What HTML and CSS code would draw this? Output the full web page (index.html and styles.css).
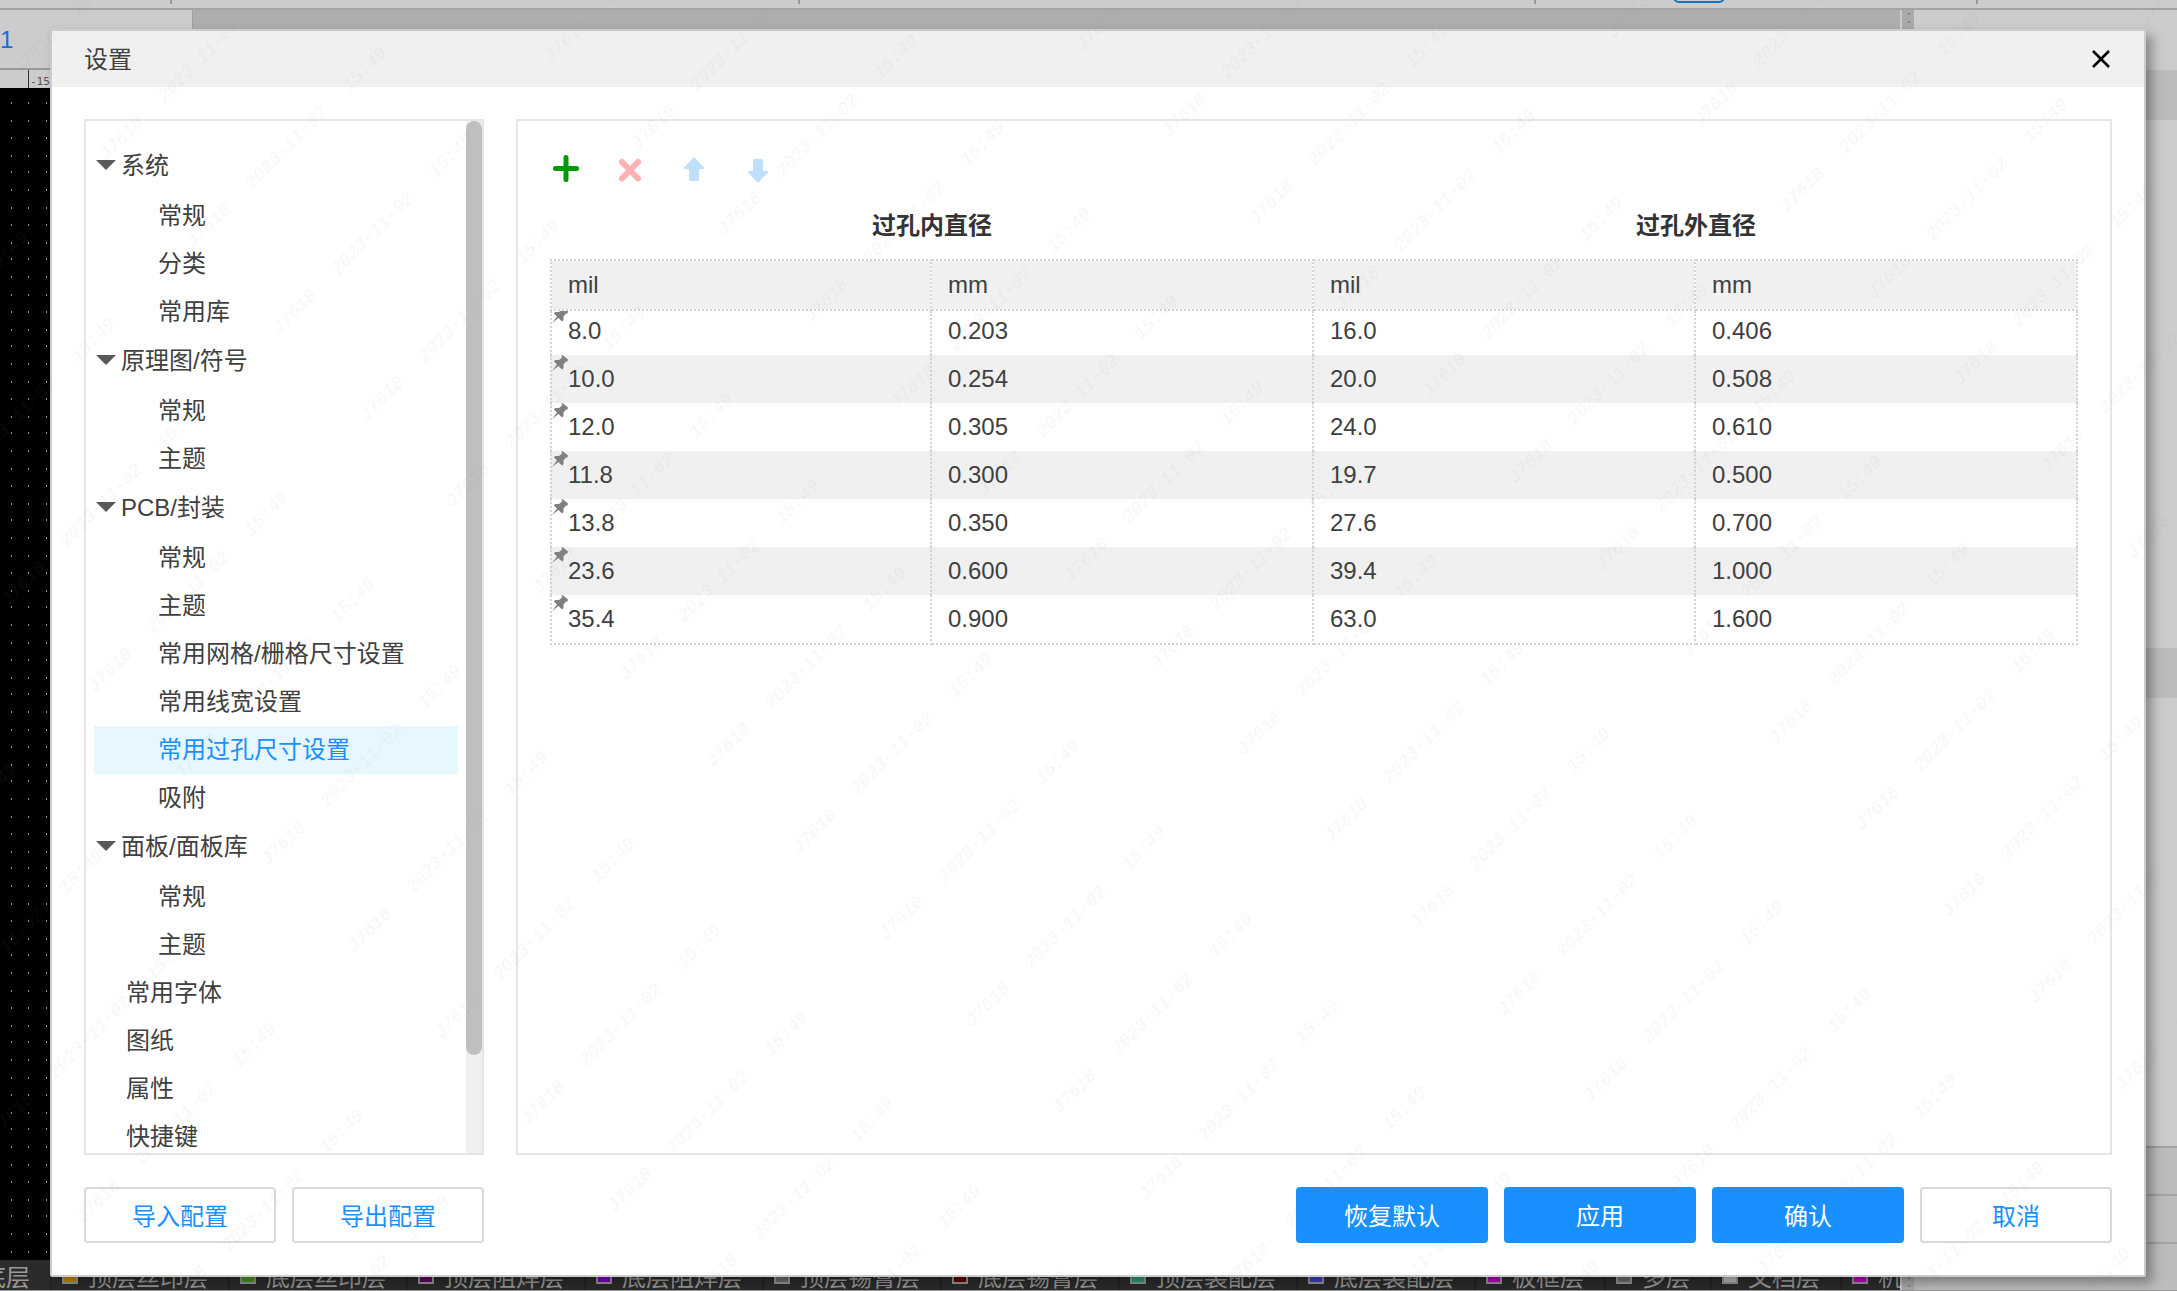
FILE: index.html
```html
<!DOCTYPE html>
<html lang="zh-CN">
<head>
<meta charset="utf-8">
<title>设置</title>
<link rel="stylesheet" href="styles.css">
</head>
<body>
<svg class="defs" aria-hidden="true">
  <symbol id="pin" viewBox="0 0 16 16"><path d="M10.500 0 L16 4.500 L15.500 6.500 L14 6.500 L11.500 9.500 L11.500 13 L10 14.500 L6.500 11 L0 16 L5 9.500 L2 6.500 L3 5 L7 5 L10 2.500 L9.500 1 Z"/></symbol>
</svg>

<div class="app" aria-hidden="true">
  <div class="app-toolbar">
    <i class="tick tick-1"></i><i class="tick tick-2"></i><i class="tick tick-3"></i><i class="tool-active"></i><i class="tick tick-4"></i>
  </div>
  <div class="app-main">
    <div class="workspace">
      <div class="tabs"><div class="tab">1</div></div>
      <div class="ruler"><span class="ruler-mark">-15</span></div>
      <svg class="canvas">
        <defs>
          <pattern id="dots" width="87" height="87" patternUnits="userSpaceOnUse" x="-6" y="-2">
            <path d="M17 17h1M34 17h1M52 17h1M17 35h1M34 35h1M52 35h1M17 52h1M34 52h1M52 52h1M17 70h1M34 70h1M52 70h1M17 86h1M34 86h1M52 86h1" stroke="#999" stroke-width="2"/>
          </pattern>
        </defs>
        <rect width="100%" height="100%" fill="#000"/>
        <rect width="100%" height="100%" fill="url(#dots)"/>
      </svg>
      <div class="layers">
        <span class="layer"><i class="swatch blue"></i>底层</span>
        <span class="layer"><i class="swatch yellow"></i>顶层丝印层</span>
        <span class="layer"><i class="swatch green"></i>底层丝印层</span>
        <span class="layer"><i class="swatch purple"></i>顶层阻焊层</span>
        <span class="layer"><i class="swatch violet"></i>底层阻焊层</span>
        <span class="layer"><i class="swatch gray"></i>顶层锡膏层</span>
        <span class="layer"><i class="swatch maroon"></i>底层锡膏层</span>
        <span class="layer"><i class="swatch teal"></i>顶层装配层</span>
        <span class="layer"><i class="swatch blue"></i>底层装配层</span>
        <span class="layer"><i class="swatch magenta"></i>板框层</span>
        <span class="layer"><i class="swatch gray"></i>多层</span>
        <span class="layer"><i class="swatch silver"></i>文档层</span>
        <span class="layer"><i class="swatch magenta"></i>机</span>
      </div>
    </div>
    <div class="splitter"></div>
    <div class="props">
      <div class="props-space"></div>
      <div class="props-head"></div>
      <div class="props-body"></div>
      <div class="props-head"></div>
      <div class="props-fill"></div>
      <div class="props-row"></div>
      <div class="props-row"></div>
      <div class="props-row"></div>
    </div>
  </div>
</div>

<section class="modal" role="dialog" aria-labelledby="modal-title">
  <header class="modal-head">
    <h1 id="modal-title" class="modal-title">设置</h1>
    <button class="close" type="button" aria-label="关闭">
      <svg width="20" height="18" viewBox="0 0 20 18"><path d="M1 1 L17 17 M17 1 L1 17" fill="none" stroke="#000" stroke-width="2.500"/></svg>
    </button>
  </header>

  <div class="modal-body">
    <nav class="side">
      <ul class="tree">
        <li class="group">系统</li>
        <li class="item"><a href="#">常规</a></li>
        <li class="item"><a href="#">分类</a></li>
        <li class="item"><a href="#">常用库</a></li>
        <li class="group">原理图/符号</li>
        <li class="item"><a href="#">常规</a></li>
        <li class="item"><a href="#">主题</a></li>
        <li class="group">PCB/封装</li>
        <li class="item"><a href="#">常规</a></li>
        <li class="item"><a href="#">主题</a></li>
        <li class="item"><a href="#">常用网格/栅格尺寸设置</a></li>
        <li class="item"><a href="#">常用线宽设置</a></li>
        <li class="item selected"><a href="#">常用过孔尺寸设置</a></li>
        <li class="item"><a href="#">吸附</a></li>
        <li class="group">面板/面板库</li>
        <li class="item"><a href="#">常规</a></li>
        <li class="item"><a href="#">主题</a></li>
        <li class="item top"><a href="#">常用字体</a></li>
        <li class="item top"><a href="#">图纸</a></li>
        <li class="item top"><a href="#">属性</a></li>
        <li class="item top"><a href="#">快捷键</a></li>
      </ul>
      <div class="scrollbar"><div class="thumb"></div></div>
    </nav>

    <main class="content">
      <div class="tools">
        <button class="tool" type="button" aria-label="添加"><svg width="32" height="32" viewBox="0 0 32 32"><path d="M16 4.500V26.500M5.500 15.500H26.500" fill="none" stroke="#009900" stroke-width="5" stroke-linecap="round"/></svg></button>
        <button class="tool" type="button" aria-label="删除" disabled><svg width="32" height="32" viewBox="0 0 32 32"><path d="M8 9L24 25.500M24 9L8 25.500" fill="none" stroke="#ffb2b2" stroke-width="6" stroke-linecap="round"/></svg></button>
        <button class="tool" type="button" aria-label="上移" disabled><svg width="32" height="32" viewBox="0 0 32 32"><path d="M16 4L26 14.500Q26.500 16 25 16H21V26.500Q21 28 19.500 28H12.500Q11 28 11 26.500V16H7Q5.500 16 6 14.500Z" fill="#bfdfff"/></svg></button>
        <button class="tool" type="button" aria-label="下移" disabled><svg width="32" height="32" viewBox="0 0 32 32"><path d="M16 30L26 19.500Q26.500 18 25 18H21V7.500Q21 6 19.500 6H12.500Q11 6 11 7.500V18H7Q5.500 18 6 19.500Z" fill="#bfdfff"/></svg></button>
      </div>
      <table class="vias">
        <thead>
          <tr class="titles"><th colspan="2" scope="colgroup">过孔内直径</th><th colspan="2" scope="colgroup">过孔外直径</th></tr>
          <tr class="units"><th scope="col">mil</th><th scope="col">mm</th><th scope="col">mil</th><th scope="col">mm</th></tr>
        </thead>
        <tbody>
          <tr><td><svg class="pin"><use href="#pin"/></svg>8.0</td><td>0.203</td><td>16.0</td><td>0.406</td></tr>
          <tr><td><svg class="pin"><use href="#pin"/></svg>10.0</td><td>0.254</td><td>20.0</td><td>0.508</td></tr>
          <tr><td><svg class="pin"><use href="#pin"/></svg>12.0</td><td>0.305</td><td>24.0</td><td>0.610</td></tr>
          <tr><td><svg class="pin"><use href="#pin"/></svg>11.8</td><td>0.300</td><td>19.7</td><td>0.500</td></tr>
          <tr><td><svg class="pin"><use href="#pin"/></svg>13.8</td><td>0.350</td><td>27.6</td><td>0.700</td></tr>
          <tr><td><svg class="pin"><use href="#pin"/></svg>23.6</td><td>0.600</td><td>39.4</td><td>1.000</td></tr>
          <tr><td><svg class="pin"><use href="#pin"/></svg>35.4</td><td>0.900</td><td>63.0</td><td>1.600</td></tr>
        </tbody>
      </table>
    </main>
  </div>

  <footer class="modal-foot">
    <button class="btn" type="button">导入配置</button>
    <button class="btn" type="button">导出配置</button>
    <span class="spacer"></span>
    <button class="btn primary" type="button">恢复默认</button>
    <button class="btn primary" type="button">应用</button>
    <button class="btn primary" type="button">确认</button>
    <button class="btn" type="button">取消</button>
  </footer>
</section>

<svg class="watermark" aria-hidden="true">
  <defs>
    <pattern id="mark" width="384" height="245" patternUnits="userSpaceOnUse" patternTransform="rotate(-45)">
      <g class="mark-text">
        <text x="345" y="67">J7618</text><text x="-39" y="67">J7618</text><text x="44" y="67">2023-11-02</text><text x="182" y="67">15:49</text>
        <text x="345" y="189">J7618</text><text x="-39" y="189">J7618</text><text x="44" y="189">2023-11-02</text><text x="182" y="189">15:49</text>
      </g>
    </pattern>
  </defs>
  <rect width="100%" height="100%" fill="url(#mark)"/>
</svg>
</body>
</html>
```
FILE: styles.css
```css
* { box-sizing: border-box; }

body {
  margin: 0;
  height: 100vh;
  overflow: hidden;
  position: relative;
  font-family: "Liberation Sans", "Noto Sans CJK SC", sans-serif;
  font-size: 24px;
  line-height: 32px;
  color: #404040;
}

.defs { position: absolute; width: 0; height: 0; }

/* application behind the dialog */
.app {
  display: flex;
  flex-direction: column;
  height: 100%;
  background: #ccc;
  border-bottom: 1px solid #999;
}
.app-toolbar {
  position: relative;
  flex: none;
  height: 10px;
  border-bottom: 2px solid #a3a3a3;
}
.tick { position: absolute; top: 0; width: 2px; height: 4px; background: #999; }
.tick-1 { left: 170px; }
.tick-2 { left: 798px; }
.tick-3 { left: 1534px; }
.tick-4 { left: 1976px; }
.tool-active {
  position: absolute;
  left: 1673px;
  top: -20px;
  width: 52px;
  height: 23px;
  border: 2px solid #1473cc;
  border-radius: 6px;
}
.app-main { display: flex; flex: 1; min-height: 0; }
.workspace { flex: 1; min-width: 0; display: flex; flex-direction: column; }
.tabs { display: flex; height: 60px; background: #aeaeae; border-bottom: 2px solid #999; }
.tab {
  width: 193px;
  padding: 14px 0;
  background: #ccc;
  border-right: 1px solid #a0a0a0;
  color: #1a6fd0;
}
.ruler { height: 18px; padding-left: 28px; background: #ccc; }
.ruler-mark {
  display: block;
  height: 18px;
  padding-left: 1px;
  border-left: 1px solid #333;
  font-family: "DejaVu Sans Mono", monospace;
  font-size: 11px;
  line-height: 24px;
  color: #555;
}
.canvas { display: block; width: 100%; flex: 1; min-height: 0; }
.layers {
  display: flex;
  flex: none;
  height: 30px;
  overflow: hidden;
  background: #2b2b2b;
  color: #999;
}
.layer {
  display: flex;
  flex: none;
  align-items: center;
  gap: 10px;
  padding: 6px 20px 0 10px;
  border-left: 2px solid #222;
  white-space: nowrap;
}
.layer:first-child { margin-left: -56px; }
.swatch { width: 16px; height: 16px; margin-bottom: 4px; border: 2px solid #999; }
.yellow { background: #c29500; }
.green { background: #4a9b22; }
.purple { background: #660066; }
.violet { background: #8000cc; }
.gray { background: #707070; }
.maroon { background: #660000; }
.teal { background: #22a37d; }
.blue { background: #4040cc; }
.magenta { background: #c000c0; }
.silver { background: #c0c0c0; }
.splitter { width: 14px; background: #aaa radial-gradient(#888 1px, transparent 2px) 0 0 / 14px 8px; border-left: 2px solid #ccc; }
.props { width: 263px; display: flex; flex-direction: column; }
.props-space { height: 60px; }
.props-head { height: 50px; background: #bcbcbc; }
.props-body { height: 528px; }
.props-fill { flex: 1; }
.props-row { height: 48px; background: #bcbcbc; border-top: 2px solid #a3a3a3; }

/* dialog */
.modal {
  position: absolute;
  top: 29px;
  right: 31px;
  bottom: 14px;
  left: 50px;
  display: flex;
  flex-direction: column;
  background: #fff;
  border: 2px solid #ccc;
  border-radius: 2px;
  box-shadow: 6px 6px 12px rgba(0, 0, 0, .35);
}
.modal-head {
  display: flex;
  align-items: center;
  justify-content: space-between;
  height: 56px;
  padding: 0 32px;
  background: #f0f0f0;
}
.modal-title { margin: 0; padding-top: 2px; font-size: 24px; font-weight: 400; line-height: 32px; }
.close { display: flex; padding: 0; border: 0; background: none; }
.modal-body { display: flex; flex: 1; min-height: 0; gap: 32px; padding: 32px 32px 0; }

.side {
  display: flex;
  flex: none;
  width: 400px;
  border: 2px solid #e6e6e6;
}
.tree { flex: 1; min-width: 0; margin: 0; padding: 20px 8px 0; overflow: hidden; list-style: none; }
.group, .item { white-space: nowrap; }
.group {
  display: flex;
  align-items: center;
  gap: 5px;
  height: 51px;
  padding: 0 0 1px 2px;
}
.group::before {
  content: "";
  margin-bottom: 2px;
  border: 10px solid transparent;
  border-top-color: #595959;
  border-bottom: 0;
}
.item { height: 48px; padding-left: 64px; line-height: 48px; }
.item a { color: inherit; text-decoration: none; }
.top { padding-left: 32px; }
.selected { background: #e6f7ff; color: #1890ff; }
.scrollbar { width: 16px; background: #f0f0f0; }
.thumb { height: 90.5%; border-radius: 8px; background: #bfbfbf; }

.content { flex: 1; min-width: 0; padding: 32px; border: 2px solid #e6e6e6; }
.tools { display: flex; gap: 32px; margin-bottom: 8px; }
.tool { display: block; width: 32px; height: 32px; padding: 0; border: 0; background: none; }
.tool svg, .close svg { display: block; }

.vias { width: 100%; table-layout: fixed; border-collapse: separate; border-spacing: 0; text-align: left; }
.vias th, .vias td { padding: 0 16px; }
.vias .titles th { height: 66px; padding: 0; text-align: center; color: #333; }
.units th { height: 52px; border: 2px dotted #d4d4d4; border-left: 0; background: #f0f0f0; background-clip: padding-box; font-weight: 400; }
.vias td { position: relative; height: 48px; overflow: hidden; border-right: 2px dotted #d4d4d4; }
.units th:first-child, .vias td:first-child { border-left: 2px dotted #d4d4d4; }
.vias tbody tr:nth-child(even) { background: #f0f0f0; }
.vias tbody tr:first-child td { height: 44px; padding-bottom: 4px; }
.vias tbody tr:last-child td { height: 50px; border-bottom: 2px dotted #d4d4d4; }
.pin { position: absolute; top: 0; left: 0; width: 16px; height: 16px; fill: #808080; }
.vias tbody tr:first-child .pin { top: -4px; }

.modal-foot { display: flex; gap: 16px; padding: 32px; }
.spacer { flex: 1; }
.btn {
  width: 192px;
  height: 56px;
  padding: 3px 0 0;
  border: 2px solid #d9d9d9;
  border-radius: 4px;
  background: #fff;
  color: #1890ff;
  font: inherit;
}
.primary { border-color: #1890ff; background: #1890ff; color: #fff; }

.watermark { position: absolute; top: 0; left: 0; width: 100%; height: 100%; pointer-events: none; }
.mark-text { font: italic 18px "Liberation Mono", monospace; fill: #808080; fill-opacity: .07; }
```
